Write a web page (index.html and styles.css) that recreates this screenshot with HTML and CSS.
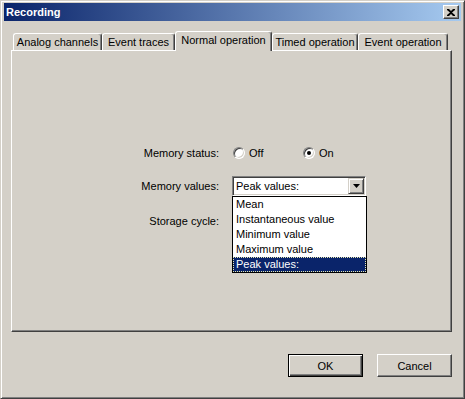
FILE: index.html
```html
<!DOCTYPE html>
<html lang="en">
<head>
    <meta charset="UTF-8">
    <title>Recording</title>
    <link rel="stylesheet" href="styles.css">
</head>
<body>
    <div class="window">
        <div class="titlebar">
            <span class="title">Recording</span>
            <button class="close-btn" aria-label="Close">
                <svg width="8" height="7" viewBox="0 0 8 7">
                    <path d="M0 0h2l2 2l2-2h2v1l-3 2.5l3 2.5v1h-2l-2-2l-2 2h-2v-1l3-2.5l-3-2.5z" fill="#000"/>
                </svg>
            </button>
        </div>

        <div class="tabs">
            <div class="tab" style="width: 89px">Analog channels</div>
            <div class="tab" style="width: 73px">Event traces</div>
            <div class="tab active" style="width: 97px">Normal operation</div>
            <div class="tab" style="width: 86px">Timed operation</div>
            <div class="tab" style="width: 90px">Event operation</div>
        </div>

        <div class="panel">
            <div class="form">
                <div class="row">
                    <label class="label">Memory status:</label>
                    <div class="radios">
                        <span class="radio-option"><span class="radio"></span>Off</span>
                        <span class="radio-option"><span class="radio checked"></span>On</span>
                    </div>
                </div>
                <div class="row row-combo">
                    <label class="label">Memory values:</label>
                    <div class="combo">
                        <span class="combo-text">Peak values:</span>
                        <span class="combo-btn">
                            <svg width="7" height="4" viewBox="0 0 7 4"><path d="M0 0h7l-3.5 4z" fill="#000"/></svg>
                        </span>
                        <ul class="dropdown">
                            <li>Mean</li>
                            <li>Instantaneous value</li>
                            <li>Minimum value</li>
                            <li>Maximum value</li>
                            <li class="selected">Peak values:</li>
                        </ul>
                    </div>
                </div>
                <div class="row row-storage">
                    <label class="label">Storage cycle:</label>
                </div>
            </div>
        </div>

        <div class="buttons">
            <button class="button default">OK</button>
            <button class="button">Cancel</button>
        </div>
    </div>
</body>
</html>
```

FILE: styles.css
```css
body {
    margin: 0;
    font-family: "Liberation Sans", Arial, sans-serif;
    font-size: 11px;
    color: #000;
    background-color: #d4d0c8;
}
.window {
    width: 465px;
    height: 399px;
    box-sizing: border-box;
    background-color: #d4d0c8;
    border: 1px solid;
    border-color: #d4d0c8 #404040 #404040 #d4d0c8;
    box-shadow: inset 1px 1px #fff, inset -1px -1px #808080;
    padding: 2px 3px 3px 3px;
}
.titlebar {
    height: 18px;
    display: flex;
    align-items: center;
    justify-content: space-between;
    padding: 0 2px 0 2px;
    background: linear-gradient(to right, #0a246a, #a6caf0);
}
.title {
    color: #fff;
    font-weight: bold;
    font-size: 11px;
}
.close-btn {
    width: 16px;
    height: 14px;
    padding: 0;
    display: flex;
    align-items: center;
    justify-content: center;
    background-color: #d4d0c8;
    border: 1px solid;
    border-color: #fff #404040 #404040 #fff;
    box-shadow: inset -1px -1px #808080;
}
.tabs {
    display: flex;
    align-items: flex-end;
    margin: 10px 0 0 9px;
    height: 19px;
}
.tab {
    height: 17px;
    box-sizing: border-box;
    padding-top: 2px;
    line-height: 13px;
    text-align: center;
    white-space: nowrap;
    border-top: 1px solid #fff;
    border-left: 1px solid #fff;
    border-right: 1px solid #404040;
    border-radius: 3px 3px 0 0;
    box-shadow: inset -1px 0 #808080;
}
.tab.active {
    height: 20px;
    margin-bottom: -1px;
    position: relative;
    z-index: 1;
    background-color: #d4d0c8;
}
.panel {
    margin-left: 7px;
    width: 441px;
    height: 282px;
    box-sizing: border-box;
    border: 1px solid;
    border-color: #fff #404040 #404040 #fff;
    box-shadow: inset -1px -1px #808080;
}
.form {
    padding-top: 92px;
}
.row {
    display: grid;
    grid-template-columns: 207px auto;
    column-gap: 13px;
    align-items: center;
    height: 20px;
}
.row-combo {
    margin-top: 13px;
}
.row-storage {
    margin-top: 15px;
}
.label {
    text-align: right;
}
.radios {
    display: flex;
    align-items: center;
}
.radio-option {
    display: flex;
    align-items: center;
    gap: 4px;
    min-width: 69px;
    padding-left: 1px;
}
.radio {
    width: 12px;
    height: 12px;
    box-sizing: border-box;
    border-radius: 50%;
    border: 1px solid;
    border-color: #808080 #fff #fff #808080;
    box-shadow: inset 1px 1px #404040, inset -1px -1px #d4d0c8;
    background-color: #fff;
    display: flex;
    align-items: center;
    justify-content: center;
}
.radio.checked::after {
    content: "";
    width: 4px;
    height: 4px;
    border-radius: 50%;
    background-color: #000;
}
.combo {
    position: relative;
    width: 134px;
    height: 20px;
    box-sizing: border-box;
    border: 1px solid;
    border-color: #808080 #fff #fff #808080;
    box-shadow: inset 1px 1px #404040, inset -1px -1px #d4d0c8;
    background-color: #fff;
    display: flex;
    align-items: center;
    justify-content: space-between;
    padding: 1px 1px 1px 3px;
}
.combo-btn {
    width: 16px;
    height: 16px;
    box-sizing: border-box;
    display: flex;
    align-items: center;
    justify-content: center;
    background-color: #d4d0c8;
    border: 1px solid;
    border-color: #d4d0c8 #404040 #404040 #d4d0c8;
    box-shadow: inset 1px 1px #fff, inset -1px -1px #808080;
}
.dropdown {
    position: absolute;
    top: 19px;
    left: -1px;
    width: 135px;
    margin: 0;
    padding: 0;
    list-style: none;
    box-sizing: border-box;
    border: 1px solid #000;
    background-color: #fff;
}
.dropdown li {
    height: 15px;
    line-height: 15px;
    padding-left: 3px;
}
.dropdown li.selected {
    background-color: #0a246a;
    color: #fff;
    outline: 1px dotted #e8e8b0;
    outline-offset: -1px;
}
.buttons {
    display: flex;
    justify-content: flex-end;
    gap: 14px;
    margin-top: 22px;
    padding-right: 9px;
}
.button {
    width: 75px;
    height: 23px;
    font-family: "Liberation Sans", Arial, sans-serif;
    font-size: 11px;
    color: #000;
    background-color: #d4d0c8;
    border: 1px solid;
    border-color: #fff #404040 #404040 #fff;
    box-shadow: inset -1px -1px #808080;
    padding: 0;
}
.button.default {
    width: 75px;
    border-color: #000;
    box-shadow: inset 1px 1px #fff, inset -1px -1px #404040, inset -2px -2px #808080;
}
```
